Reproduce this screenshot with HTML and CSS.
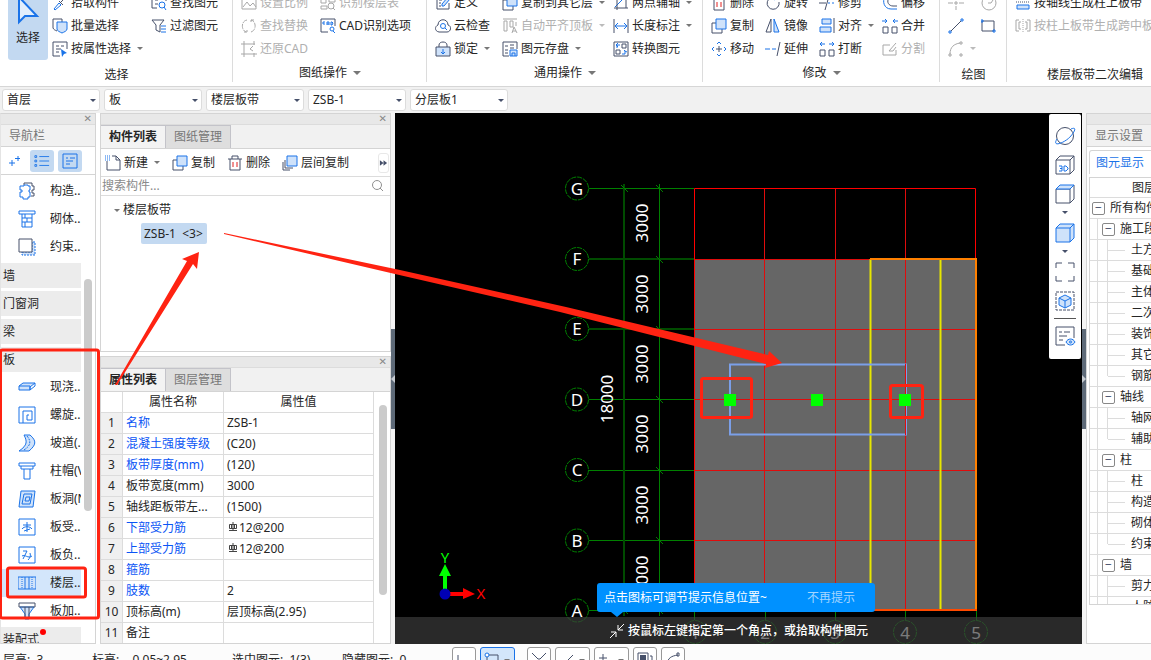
FILE: index.html
```html
<!DOCTYPE html>
<html lang="zh-CN">
<head>
<meta charset="utf-8">
<title>楼层板带</title>
<link rel="stylesheet" href="styles.css">
</head>
<body>
<svg class="defs" aria-hidden="true">
  <symbol id="i-pick" viewBox="0 0 16 16"><path class="b" d="M2 14l5-6 2 2-6 5z"/><path class="d" d="M7 6l4 4M9 7l4-4"/></symbol>
  <symbol id="i-batch" viewBox="0 0 16 16"><path class="d" d="M10 4V1H1v9c1 2 2 2 4 3"/><path class="b f" d="M5 4h10v7c0 2-3 3-5 4-2-1-5-2-5-4z"/></symbol>
  <symbol id="i-attr" viewBox="0 0 16 16"><path class="d" d="M8 15H1V1h14v7M4 5h3M9 5h3M4 8h5M4 11h3"/><path class="bf" d="M9 8l6 4-3 1-2 3z"/></symbol>
  <symbol id="i-find" viewBox="0 0 16 16"><path class="d" d="M6 13H1V1h14v5M4 9h3M4 5h3"/><circle class="b" cx="11" cy="10" r="3"/><path class="b" d="M13 12l2 3"/></symbol>
  <symbol id="i-filter" viewBox="0 0 16 16"><path class="d" d="M1 2h12L9 7v7l-4-2V7z"/><path class="b" d="M10 8h5M10 11h5M10 14h5"/></symbol>
  <symbol id="i-scale" viewBox="0 0 16 16"><path class="d" d="M1 2h14v12H1zM2 12l4-5 3 4 3-3 3 4"/></symbol>
  <symbol id="i-swap" viewBox="0 0 16 16"><path class="d" d="M6 2C0 3 0 12 5 14M3 14h3v-3M10 14c6-2 5-11 0-12M13 2h-3v3" stroke-dasharray="5 1"/></symbol>
  <symbol id="i-crop" viewBox="0 0 16 16"><path class="d" d="M3 0v13h13M0 3h14M3 13H0M3 13v3M13 0v4M13 12v4M12 5L9 8l3 2"/></symbol>
  <symbol id="i-ident" viewBox="0 0 16 16"><path class="d" d="M1 3h5v5H1zM9 1v6h6V3H9M1 11h6v3H1z"/><circle class="d" cx="11" cy="11" r="3"/><path class="d" d="M13 13l2 2"/></symbol>
  <symbol id="i-cad" viewBox="0 0 16 16"><path class="d" d="M8 14H1V1h14v7"/><path class="b" d="M5 4H3v2h2M7 7V4h2v3M7 6h2M11 4h1l1 1-1 2h-1z"/><circle class="b" cx="12" cy="11" r="2"/><path class="b" d="M13 13l2 2"/></symbol>
  <symbol id="i-def" viewBox="0 0 16 16"><path class="d" d="M9 1H2v13h12V8M4 5h3M4 8h2M4 11h2"/><path class="b f" d="M7 9l6-7 2 2-6 7H7z"/></symbol>
  <symbol id="i-cloud" viewBox="0 0 16 16"><path class="d" d="M4 14C-1 13 0 8 3 7c0-7 10-7 10 0 4 1 3 7-1 7z"/><circle class="b" cx="8" cy="8" r="2.5"/><path class="b" d="M10 10l2 2"/></symbol>
  <symbol id="i-lock" viewBox="0 0 16 16"><path class="d" d="M4 6V4c0-4 8-4 8 0v2"/><path class="d f" d="M1 6h14v9H1z"/><path class="b" d="M8 8v5M6 11l2 2 2-2"/></symbol>
  <symbol id="i-copy" viewBox="0 0 16 16"><path class="d" d="M5 5H1v10h10v-4"/><path class="b f" d="M5 1h10v10H5z"/></symbol>
  <symbol id="i-flat" viewBox="0 0 16 16"><path class="d" d="M1 1h14M2 3h3v10H2zM8 3h3v6H8zM10 15l2-6 3 6M11 13h3M14 4v4"/></symbol>
  <symbol id="i-save" viewBox="0 0 16 16"><path class="d" d="M7 15H1V1h14v7M3 5h3M8 4h4M3 9h3M8 7h4M3 12h3"/><path class="b f" d="M8 9h7v6H8zM10 15v-3h3v3"/></symbol>
  <symbol id="i-axis" viewBox="0 0 16 16"><path class="b" d="M2 12L14 0"/><path class="d" d="M1 13h14M4 0v15M13 4v9"/></symbol>
  <symbol id="i-dim" viewBox="0 0 16 16"><path class="d" d="M1 1v14M15 1v14"/><path class="b" d="M2 8h12M5 5L2 8l3 3M11 5l3 3-3 3"/></symbol>
  <symbol id="i-conv" viewBox="0 0 16 16"><path class="d" d="M1 1h14v14H1zM3 9h4v4H3zM9 3h4v4H9z"/><path class="b" d="M4 7V4h3M5 2L3 4l2 2M9 13h3v-3M11 9l1 1 2 1"/></symbol>
  <symbol id="i-del" viewBox="0 0 16 16"><path class="d" d="M1 4h14M5 4V1h6v3M3 4v11h10V4"/><path class="r" d="M6 7v5M10 7v5"/></symbol>
  <symbol id="i-move" viewBox="0 0 16 16"><path class="d" d="M8 5v6M5 8h6"/><path class="b" d="M6 3l2-2 2 2M6 13l2 2 2-2M3 6L1 8l2 2M13 6l2 2-2 2"/></symbol>
  <symbol id="i-rot" viewBox="0 0 16 16"><path class="d" d="M11 3a6 6 0 1 0 3 4"/><path class="b" d="M10 0l2 3-3 2"/></symbol>
  <symbol id="i-mirror" viewBox="0 0 16 16"><path class="d" d="M6 1v13H1z"/><path class="b f" d="M9 1v13h5z"/></symbol>
  <symbol id="i-ext" viewBox="0 0 16 16"><path class="b" d="M0 8h5M7 8h4"/><path class="d" d="M15 1l-3 14"/></symbol>
  <symbol id="i-trim" viewBox="0 0 16 16"><path class="d" d="M0 8h7M10 1L6 15"/><path class="b" d="M9 8h2M13 8h2"/></symbol>
  <symbol id="i-align" viewBox="0 0 16 16"><path class="b f" d="M3 1h9v5H3zM1 9h11v5H1z"/><path class="d" d="M15 0v15"/></symbol>
  <symbol id="i-break" viewBox="0 0 16 16"><path class="d" d="M1 9h5v6H1zM10 9h5v6h-5z"/><path class="b" d="M6 3H1M3 1L1 3l2 2M10 3h5M13 1l2 2-2 2"/></symbol>
  <symbol id="i-merge" viewBox="0 0 16 16"><path class="d" d="M1 9h5v6H1zM10 9h5v6h-5z"/><path class="b" d="M0 3h5M3 1l2 2-2 2M16 3h-5M13 1l-2 2 2 2"/></symbol>
  <symbol id="i-offset" viewBox="0 0 16 16"><path class="d" d="M15 11h-4c-4 0-7-4-4-8"/><path class="b" d="M15 14h-6C2 14 0 6 3 2"/></symbol>
  <symbol id="i-split" viewBox="0 0 16 16"><path class="d" d="M8 4H1v10h13V9M7 10l7-8M7 10l4 0 3-4"/></symbol>
  <symbol id="i-point" viewBox="0 0 16 16"><path class="d" d="M0 8h5M11 8h5M8 0v4M8 11v4M7 7h2v2H7z"/></symbol>
  <symbol id="i-circle" viewBox="0 0 16 16"><circle class="d" cx="8" cy="8" r="7"/><path class="d" d="M7 8h3l2-3"/></symbol>
  <symbol id="i-line" viewBox="0 0 16 16"><path class="d" d="M3 13L13 3"/><path class="b" d="M1 13h2v2H1zM13 1h2v2h-2z"/></symbol>
  <symbol id="i-rect" viewBox="0 0 16 16"><path class="d" d="M1 3h12v10H1z"/><path class="b" d="M0 2h2v2H0zM12 12h2v2h-2z"/></symbol>
  <symbol id="i-arc" viewBox="0 0 16 16"><path class="d" d="M2 13C2 6 6 3 12 2M1 13h2v2H1zM12 1h2v2h-2zM12 13h2v2h-2z"/></symbol>
  <symbol id="i-strip" viewBox="0 0 16 16"><path class="d" d="M1 7h14" stroke-dasharray="1 1"/><path class="b f" d="M2 10h12v4H2z"/></symbol>
  <symbol id="i-mid" viewBox="0 0 16 16"><path class="d" d="M4 2H1v11h3M12 2h3v11h-3M6 4H4v7h2M10 4h2v7h-2"/><path class="d" d="M8 1v14" stroke-dasharray="1 1"/></symbol>
  <symbol id="i-new" viewBox="0 0 16 16"><path class="d" d="M2 6v9h13V5l-4-4H7M11 1v4h4"/><path class="b" d="M0 1h5M0 3h5M0 5h5" stroke-dasharray="1 1"/></symbol>
  <symbol id="i-layers" viewBox="0 0 16 16"><path class="d" d="M3 5v8h8M1 7v8h7"/><path class="b f" d="M5 1h10v10H5z"/></symbol>
  <symbol id="i-mag" viewBox="0 0 16 16"><circle class="g" cx="8" cy="7" r="4.5"/><path class="g" d="M11 10l3 3"/></symbol>
  <symbol id="n-col" viewBox="0 0 18 18"><path class="d" d="M6 3V1h8v3h2v4h-2v3h2v3h-3"/><path class="b w" d="M4 4h2V3h4v1h2v4h-1v2h1v5h-2v2H5v-2H2v-5h2V8H2V4z"/></symbol>
  <symbol id="n-wall" viewBox="0 0 18 18"><path class="b" d="M1 1h16v3H1zM4 4v13h10V4M4 8h10M4 12h10M9 8v4M7 4v4M7 12v5"/></symbol>
  <symbol id="n-con" viewBox="0 0 18 18"><path class="b f" d="M4 14h10V4h3v13H4z" stroke-dasharray="2 1"/><path class="d w" d="M1 1h13v13H1z"/></symbol>
  <symbol id="n-slab" viewBox="0 0 18 18"><path class="b f" d="M1 8l4-3h12l-5 4v3H1z"/><path class="b" d="M1 8h11v4M12 12l5-4V5"/></symbol>
  <symbol id="n-spiral" viewBox="0 0 18 18"><path class="b" d="M5 17V5h9v9H9V9h2M1 17V1h16v16H1"/></symbol>
  <symbol id="n-ramp" viewBox="0 0 18 18"><path class="b f" d="M6 1h6c7 6 6 10-1 16H1C10 11 9 7 6 1z"/><path class="b" d="M9 2c5 6 3 10-3 14" stroke-dasharray="2 1"/></symbol>
  <symbol id="n-cap" viewBox="0 0 18 18"><path class="b" d="M1 1h16v3H1zM3 4v3h12V4M6 7v10h6V7"/></symbol>
  <symbol id="n-hole" viewBox="0 0 18 18"><path class="b f" d="M3 1h14l-2 16H1zM6 4h8l-2 10H4zM8 7h4l-1 4H7z"/></symbol>
  <symbol id="n-bar" viewBox="0 0 18 18"><path class="b" d="M1 1h16v16H1zM9 4v10M5 7h8M4 11c2-3 8-3 10 0M6 13l6-2"/></symbol>
  <symbol id="n-neg" viewBox="0 0 18 18"><path class="b" d="M1 1h16v16H1zM5 5h4L5 13M4 10c3-2 6 3 10 0M12 7c1 3 0 5-2 7"/></symbol>
  <symbol id="n-strip" viewBox="0 0 18 18"><path class="b f" d="M0 3h18v12H0z"/><path class="b" d="M4 3v12M14 3v12" stroke-dasharray="1 1"/><path class="b" d="M7 3v12M11 3v12"/></symbol>
  <symbol id="n-haunch" viewBox="0 0 18 18"><path class="b f" d="M2 5l5 7v5h4v-5l5-7z"/><path class="d" d="M1 1h16v4H1zM7 5v12M11 5v12"/></symbol>
</svg>

<div class="app">
  <header class="ribbon">
    <section class="group g-select">
      <div class="tools">
        <button class="big"><svg viewBox="0 0 24 32"><path d="M3 4v25l6-6h12z" fill="#e3effc" stroke="#1a73e8" stroke-width="2"/></svg>选择</button>
        <div class="col">
          <button><svg><use href="#i-pick"/></svg>拾取构件</button>
          <button><svg><use href="#i-batch"/></svg>批量选择</button>
          <button><svg><use href="#i-attr"/></svg>按属性选择<i class="caret"></i></button>
        </div>
        <div class="col">
          <button><svg><use href="#i-find"/></svg>查找图元</button>
          <button><svg><use href="#i-filter"/></svg>过滤图元</button>
        </div>
      </div>
      <div class="name plain">选择</div>
    </section>
    <section class="group g-draw">
      <div class="tools">
        <div class="col">
          <button disabled><svg><use href="#i-scale"/></svg>设置比例</button>
          <button disabled><svg><use href="#i-swap"/></svg>查找替换</button>
          <button disabled><svg><use href="#i-crop"/></svg>还原CAD</button>
        </div>
        <div class="col">
          <button disabled><svg><use href="#i-ident"/></svg>识别楼层表</button>
          <button><svg><use href="#i-cad"/></svg>CAD识别选项</button>
        </div>
      </div>
      <div class="name">图纸操作<i class="caret"></i></div>
    </section>
    <section class="group g-common">
      <div class="tools">
        <div class="col">
          <button><svg><use href="#i-def"/></svg>定义</button>
          <button><svg><use href="#i-cloud"/></svg>云检查</button>
          <button><svg><use href="#i-lock"/></svg>锁定<i class="caret"></i></button>
        </div>
        <div class="col">
          <button><svg><use href="#i-copy"/></svg>复制到其它层<i class="caret"></i></button>
          <button disabled><svg><use href="#i-flat"/></svg>自动平齐顶板<i class="caret"></i></button>
          <button><svg><use href="#i-save"/></svg>图元存盘<i class="caret"></i></button>
        </div>
        <div class="col">
          <button><svg><use href="#i-axis"/></svg>两点辅轴<i class="caret"></i></button>
          <button><svg><use href="#i-dim"/></svg>长度标注<i class="caret"></i></button>
          <button><svg><use href="#i-conv"/></svg>转换图元</button>
        </div>
      </div>
      <div class="name">通用操作<i class="caret"></i></div>
    </section>
    <section class="group g-modify">
      <div class="tools">
        <div class="col">
          <button><svg><use href="#i-del"/></svg>删除</button>
          <button><svg><use href="#i-copy"/></svg>复制</button>
          <button><svg><use href="#i-move"/></svg>移动</button>
        </div>
        <div class="col">
          <button><svg><use href="#i-rot"/></svg>旋转</button>
          <button><svg><use href="#i-mirror"/></svg>镜像</button>
          <button><svg><use href="#i-ext"/></svg>延伸</button>
        </div>
        <div class="col">
          <button><svg><use href="#i-trim"/></svg>修剪</button>
          <button><svg><use href="#i-align"/></svg>对齐<i class="caret"></i></button>
          <button><svg><use href="#i-break"/></svg>打断</button>
        </div>
        <div class="col">
          <button><svg><use href="#i-offset"/></svg>偏移</button>
          <button><svg><use href="#i-merge"/></svg>合并</button>
          <button disabled><svg><use href="#i-split"/></svg>分割</button>
        </div>
      </div>
      <div class="name">修改<i class="caret"></i></div>
    </section>
    <section class="group g-paint">
      <div class="tools">
        <div class="col">
          <button disabled aria-label="点"><svg><use href="#i-point"/></svg></button>
          <button aria-label="直线"><svg><use href="#i-line"/></svg></button>
          <button disabled aria-label="弧线"><svg><use href="#i-arc"/></svg><i class="caret"></i></button>
        </div>
        <div class="col">
          <button disabled aria-label="圆"><svg><use href="#i-circle"/></svg></button>
          <button aria-label="矩形"><svg><use href="#i-rect"/></svg></button>
        </div>
      </div>
      <div class="name plain">绘图</div>
    </section>
    <section class="group g-edit">
      <div class="tools">
        <div class="col">
          <button><svg><use href="#i-strip"/></svg>按轴线生成柱上板带</button>
          <button disabled><svg><use href="#i-mid"/></svg>按柱上板带生成跨中板带</button>
        </div>
      </div>
      <div class="name plain">楼层板带二次编辑</div>
    </section>
  </header>

  <div class="filters">
    <label class="pick"><select aria-label="楼层"><option>首层</option></select></label>
    <label class="pick"><select aria-label="构件大类"><option>板</option></select></label>
    <label class="pick"><select aria-label="构件类型"><option>楼层板带</option></select></label>
    <label class="pick"><select aria-label="构件"><option>ZSB-1</option></select></label>
    <label class="pick"><select aria-label="分层"><option>分层板1</option></select></label>
  </div>

  <main class="work">
    <nav class="panel nav">
      <div class="strip"><button class="close" aria-label="关闭">✕</button></div>
      <div class="title">导航栏</div>
      <div class="modes">
        <button aria-label="添加"><svg viewBox="0 0 16 16"><path class="b" d="M4 7v6M1 10h6M10 3v5M7 5.500h5"/></svg></button>
        <button class="on" aria-label="列表"><svg viewBox="0 0 18 16"><path class="b" d="M6 3h11M6 8h11M6 13h11M1 2h2v2H1zM1 7h2v2H1zM1 12h2v2H1z"/></svg></button>
        <button class="on" aria-label="详情"><svg viewBox="0 0 16 16"><path class="b" d="M1 1h14v14H1zM4 5h2M8 5h5M4 8h7M4 11h4"/></svg></button>
      </div>
      <div class="scroller">
        <div class="items">
          <button class="item"><svg><use href="#n-col"/></svg>构造..</button>
          <button class="item"><svg><use href="#n-wall"/></svg>砌体..</button>
          <button class="item"><svg><use href="#n-con"/></svg>约束..</button>
          <button class="cat">墙</button>
          <button class="cat">门窗洞</button>
          <button class="cat">梁</button>
          <button class="cat">板</button>
          <button class="item"><svg><use href="#n-slab"/></svg>现浇..</button>
          <button class="item"><svg><use href="#n-spiral"/></svg>螺旋..</button>
          <button class="item"><svg><use href="#n-ramp"/></svg>坡道(..</button>
          <button class="item"><svg><use href="#n-cap"/></svg>柱帽(V)</button>
          <button class="item"><svg><use href="#n-hole"/></svg>板洞(N)</button>
          <button class="item"><svg><use href="#n-bar"/></svg>板受..</button>
          <button class="item"><svg><use href="#n-neg"/></svg>板负..</button>
          <button class="item sel"><svg><use href="#n-strip"/></svg>楼层..</button>
          <button class="item"><svg><use href="#n-haunch"/></svg>板加..</button>
          <button class="cat">装配式<span class="dot"></span></button>
        </div>
        <div class="track"><div class="thumb nav-thumb"></div></div>
      </div>
    </nav>

    <div class="middle">
      <section class="panel list">
        <div class="strip"><button class="close" aria-label="关闭">✕</button></div>
        <div class="tabs"><button class="tab on">构件列表</button><button class="tab">图纸管理</button></div>
        <div class="bar">
          <button><svg><use href="#i-new"/></svg>新建<i class="caret"></i></button>
          <button><svg><use href="#i-copy"/></svg>复制</button>
          <button><svg><use href="#i-del"/></svg>删除</button>
          <button><svg><use href="#i-layers"/></svg>层间复制</button>
          <button class="more" aria-label="更多"><svg viewBox="0 0 10 8"><path d="M1 1l4 3-4 3zM5 1l4 3-4 3z" fill="#46506a"/></svg></button>
        </div>
        <div class="search"><input type="text" aria-label="搜索构件" placeholder="搜索构件..."><svg><use href="#i-mag"/></svg></div>
        <div class="tree">
          <div class="parent"><i class="caret"></i>楼层板带</div>
          <button class="leaf">ZSB-1&nbsp; &lt;3&gt;</button>
        </div>
      </section>
      <section class="panel props">
        <div class="strip"><button class="close" aria-label="关闭">✕</button></div>
        <div class="tabs"><button class="tab on">属性列表</button><button class="tab">图层管理</button></div>
        <div class="grid">
          <table>
            <thead><tr><th class="no"></th><th class="key">属性名称</th><th>属性值</th></tr></thead>
            <tbody>
              <tr><td>1</td><td class="link">名称</td><td>ZSB-1</td></tr>
              <tr><td>2</td><td class="link">混凝土强度等级</td><td>(C20)</td></tr>
              <tr><td>3</td><td class="link">板带厚度(mm)</td><td>(120)</td></tr>
              <tr><td>4</td><td>板带宽度(mm)</td><td>3000</td></tr>
              <tr><td>5</td><td>轴线距板带左...</td><td>(1500)</td></tr>
              <tr><td>6</td><td class="link">下部受力筋</td><td><svg class="rebar" viewBox="0 0 10 10"><path d="M1.500 2.500h7v4h-7zM5 0v9M1 8.500h8M3.500 2v4M6.500 2v4"/></svg>12@200</td></tr>
              <tr><td>7</td><td class="link">上部受力筋</td><td><svg class="rebar" viewBox="0 0 10 10"><path d="M1.500 2.500h7v4h-7zM5 0v9M1 8.500h8M3.500 2v4M6.500 2v4"/></svg>12@200</td></tr>
              <tr><td>8</td><td class="link">箍筋</td><td></td></tr>
              <tr><td>9</td><td class="link">肢数</td><td>2</td></tr>
              <tr><td>10</td><td>顶标高(m)</td><td>层顶标高(2.95)</td></tr>
              <tr><td>11</td><td>备注</td><td></td></tr>
            </tbody>
          </table>
          <div class="track"><div class="thumb prop-thumb"></div></div>
        </div>
      </section>
    </div>

    <div class="split"><button aria-label="收起左侧"><svg viewBox="0 0 4 8"><path d="M4 0v8L0 4z" fill="#c5cad0"/></svg></button></div>

    <section class="canvas">
      <svg class="plan" width="700" height="531" viewBox="395 113 700 531">
        <path d="M695 259h281v352H695z" fill="#666"/>
        <g stroke="#008000" fill="none">
          <path d="M589 188.500h105M589 399.500h105M589 470.500h105M589 540.500h105M589 610.500h105M659.500 184v432"/>
          <path stroke="#004b00" stroke-width="2" d="M589 259h105M589 329h105M624 184v432"/>
          <path d="M694.500 611v9M765.500 611v9M835.500 611v9M905.500 611v9M976.500 611v9"/>
          <path d="M621 185l7 7M656 185l7 7M656 256l7 7M656 326l7 7M656 396l7 7M656 467l7 7M656 537l7 7M656 607l7 7M621 607l7 7"/>
          <g stroke-dasharray="5 1">
            <circle cx="577" cy="188.500" r="11.500"/><circle cx="577" cy="259" r="11.500"/><circle cx="577" cy="329" r="11.500"/><circle cx="577" cy="399.500" r="11.500"/><circle cx="577" cy="470" r="11.500"/><circle cx="577" cy="540.500" r="11.500"/><circle cx="577" cy="610.500" r="11.500"/>
            <circle cx="695" cy="632" r="11.500"/><circle cx="765" cy="632" r="11.500"/><circle cx="835" cy="632" r="11.500"/><circle cx="905" cy="632" r="11.500"/><circle cx="976" cy="632" r="11.500"/>
          </g>
        </g>
        <g stroke="#e00c0c" fill="none">
          <path d="M764.500 188v423M835.500 188v423M905.500 188v423M695 259.500h281M695 329.500h281M695 399.500h281M695 470.500h281M695 540.500h281"/>
          <path stroke="#f00" d="M694.500 611V188.500h281V259M695 610.500h175"/>
        </g>
        <path d="M870.500 259v352M940.500 259v352" stroke="#e6e600" stroke-width="2"/>
        <path d="M870 259h106v351" stroke="#ff8000" stroke-width="2" fill="none"/>
        <path d="M870 610h107" stroke="#ff4a00" stroke-width="2"/>
        <path d="M730 364.500h176v70H730z" fill="none" stroke="#7b9fe8" stroke-width="2"/>
        <path d="M905.500 364v71" stroke="#e00c0c"/>
        <g fill="#0f0"><path d="M724 394h12v12h-12zM811 394h12v12h-12zM899 394h12v12h-12z"/></g>
        <g class="axis">
          <text x="577" y="195">G</text><text x="577" y="265">F</text><text x="577" y="335">E</text><text x="577" y="406">D</text><text x="577" y="476">C</text><text x="577" y="547">B</text><text x="577" y="617">A</text>
          <text x="695" y="639">1</text><text x="765" y="639">2</text><text x="835" y="639">3</text><text x="905" y="639">4</text><text x="976" y="639">5</text>
          <text transform="translate(648 223) rotate(-90)">3000</text><text transform="translate(648 294) rotate(-90)">3000</text><text transform="translate(648 364) rotate(-90)">3000</text><text transform="translate(648 434) rotate(-90)">3000</text><text transform="translate(648 505) rotate(-90)">3000</text><text transform="translate(648 575) rotate(-90)">3000</text>
          <text transform="translate(613 399) rotate(-90)">18000</text>
        </g>
        <path d="M443 594v-18h-4l6-12 6 12h-4v18z" fill="#0f0"/>
        <path d="M445 592h18v-4l12 6-12 5v-3h-18z" fill="#f00"/>
        <circle cx="445" cy="594" r="5.500" fill="#0000b4"/>
        <text class="ucs" x="445" y="563" fill="#0f0">Y</text><text class="ucs" x="481" y="599" fill="#f00">X</text>
      </svg>
      <div class="views">
        <button aria-label="动态观察"><svg viewBox="0 0 22 22"><circle class="d" cx="11" cy="11" r="8.500"/><path class="b" d="M3 14c-5 8 5 5 12-1 5-5 9-12 2-9"/></svg></button>
        <button aria-label="三维"><svg viewBox="0 0 22 22"><path class="d" d="M2 6h14v14H2zM2 6l4-4h14v14l-4 4M16 6l4-4"/><path class="b" d="M5 12h3v5H5M6 14.500h2M10 12h2l2 2v1l-2 2h-2z"/></svg></button>
        <button aria-label="俯视"><svg viewBox="0 0 22 22"><path class="d" d="M2 6h14v14H2zM20 2v14l-4 4"/><path class="b f" d="M2 6l4-4h14l-4 4z"/></svg></button>
        <i class="caret"></i>
        <button aria-label="着色"><svg viewBox="0 0 22 22"><path class="b f" d="M2 6l4-4h14v14l-4 4H2z"/><path class="b" d="M2 6h14v14M16 6l4-4"/></svg></button>
        <i class="caret"></i>
        <button aria-label="全屏"><svg viewBox="0 0 22 22"><path class="d" d="M2 7V2h6M14 2h6v5M20 15v5h-6M8 20H2v-5"/></svg></button>
        <button aria-label="局部三维"><svg viewBox="0 0 22 22"><path class="d" d="M2 2h18v18H2z" stroke-dasharray="3 1"/><path class="b f" d="M11 5l6 3v7l-6 3-6-3V8z"/><path class="b" d="M5 8l6 3 6-3M11 11v7"/></svg></button>
        <hr>
        <button aria-label="显示设置"><svg viewBox="0 0 22 22"><path class="d" d="M11 20H2V2h18v11M5 7h3M10 7h6M5 11h8M5 15h4"/><path class="b f" d="M12 17c2-4 7-4 9 0-2 4-7 4-9 0z"/><circle class="b" cx="16.500" cy="17" r="1"/></svg></button>
      </div>
      <div class="prompt">
        <div class="tip"><span>点击图标可调节提示信息位置~</span><button>不再提示</button></div>
        <svg viewBox="0 0 16 16"><path d="M15 1L9 7M9 2v5h5M1 15l6-6M2 9h5v5" fill="none" stroke="#fff"/></svg>按鼠标左键指定第一个角点，或拾取构件图元
      </div>
    </section>

    <div class="split"><button aria-label="收起右侧"><svg viewBox="0 0 4 8"><path d="M0 0v8l4-4z" fill="#c5cad0"/></svg></button></div>

    <aside class="panel display">
      <div class="strip"></div>
      <div class="title">显示设置</div>
      <div class="subtabs"><button>图元显示</button></div>
      <div class="layers">
        <div class="head">图层名称</div>
        <div class="row"><button class="tog">−</button>所有构件</div>
        <div class="row"><i class="guide"></i><button class="tog">−</button>施工段</div>
        <div class="row"><i class="guide"></i><i class="guide"></i><i class="dash"></i>土方工程</div>
        <div class="row"><i class="guide"></i><i class="guide"></i><i class="dash"></i>基础工程</div>
        <div class="row"><i class="guide"></i><i class="guide"></i><i class="dash"></i>主体结构</div>
        <div class="row"><i class="guide"></i><i class="guide"></i><i class="dash"></i>二次结构</div>
        <div class="row"><i class="guide"></i><i class="guide"></i><i class="dash"></i>装饰装修</div>
        <div class="row"><i class="guide"></i><i class="guide"></i><i class="dash"></i>其它土建</div>
        <div class="row"><i class="guide"></i><i class="guide end"></i><i class="dash"></i>钢筋</div>
        <div class="row"><i class="guide"></i><button class="tog">−</button>轴线</div>
        <div class="row"><i class="guide"></i><i class="guide"></i><i class="dash"></i>轴网</div>
        <div class="row"><i class="guide"></i><i class="guide end"></i><i class="dash"></i>辅助轴线</div>
        <div class="row"><i class="guide"></i><button class="tog">−</button>柱</div>
        <div class="row"><i class="guide"></i><i class="guide"></i><i class="dash"></i>柱</div>
        <div class="row"><i class="guide"></i><i class="guide"></i><i class="dash"></i>构造柱</div>
        <div class="row"><i class="guide"></i><i class="guide"></i><i class="dash"></i>砌体柱</div>
        <div class="row"><i class="guide"></i><i class="guide end"></i><i class="dash"></i>约束边缘</div>
        <div class="row"><i class="guide"></i><button class="tog">−</button>墙</div>
        <div class="row"><i class="guide"></i><i class="guide"></i><i class="dash"></i>剪力墙</div>
        <div class="row"><i class="guide"></i><i class="guide"></i><i class="dash"></i>人防墙</div>
      </div>
    </aside>
  </main>

  <footer class="status">
    <div class="line">
      <span class="s1">层高:&nbsp; 3</span><span class="s2">标高:&nbsp;&nbsp; -0.05~2.95</span><span class="s3">选中图元:&nbsp; 1(3)</span><span class="s4">隐藏图元:&nbsp; 0</span>
      <div class="snaps">
        <button aria-label="正交"><svg viewBox="0 0 16 16"><path class="d" d="M2 3v11h12"/></svg></button>
        <button class="wide on" aria-label="框选"><svg viewBox="0 0 16 16"><path class="d" d="M3 3h11v11H3z"/><circle class="b w" cx="3" cy="3" r="2"/></svg><i class="caret"></i></button>
        <button class="lead" aria-label="交点"><svg viewBox="0 0 16 16"><path class="d" d="M1 1l6 6h2l6-6M1 15l6-6h2l6 6"/></svg></button>
        <button class="wide" aria-label="垂点"><svg viewBox="0 0 16 16"><path class="d" d="M14 3L4 13M3 9l4 4"/></svg><i class="caret"></i></button>
        <button class="wide" aria-label="偏移"><svg viewBox="0 0 16 16"><path class="d" d="M5 2v8M1 6h8"/></svg><i class="caret"></i></button>
        <button aria-label="图层"><svg viewBox="0 0 16 16"><path class="d" d="M1 1h10v13H1zM13 4h2v12H5"/><path d="M3 3h6v9H3z" fill="#46506a"/></svg></button>
        <button aria-label="弧"><svg viewBox="0 0 16 16"><path class="d" d="M2 12C3 6 6 4 13 3M1 12h2v2H1zM12 1h2v3h-2z"/></svg></button>
      </div>
    </div>
  </footer>

  <svg class="marks" width="1151" height="660" aria-hidden="true">
    <g fill="none" stroke="#ff2312" stroke-width="3">
      <rect x="0.500" y="350" width="98" height="268" rx="2"/>
      <rect x="7.500" y="568" width="78" height="29" rx="2"/>
      <rect x="701.500" y="378.500" width="50" height="39" rx="2"/>
      <rect x="890.500" y="385.500" width="32" height="32" rx="2"/>
    </g>
    <path d="M115 385l72-124-5-2 17-7-2 17-4-5-76 121z" fill="#ff2312"/>
    <path d="M224 233l176 37 166 37 202 48 1-4 13 12-17 5 1-4-206-52-165-38-171-40z" fill="#ff2312"/>
  </svg>
</div>
</body>
</html>
```

FILE: styles.css
```css
* { box-sizing: border-box; }

body {
  margin: 0;
  overflow: hidden;
  background: #fff;
  color: #262626;
  font: 12px/20px "Noto Sans", "Noto Sans CJK SC", sans-serif;
}

button, select, input { font: inherit; color: inherit; margin: 0; }
button { border: 0; padding: 0; background: none; white-space: nowrap; text-align: left; }
svg { display: block; flex: none; }
.defs { position: absolute; width: 0; height: 0; }

.d, .b, .r, .g { fill: none; stroke-width: 1; }
.d { stroke: #46506a; }
.b { stroke: #1a73e8; }
.r { stroke: #e02020; }
.g { stroke: #909090; }
.f { fill: #cfe2fa; }
.w { fill: #fff; }
.bf { fill: #1a73e8; }

.caret {
  flex: none;
  width: 6px;
  height: 3px;
  border: 3px solid transparent;
  border-top-color: #777;
  border-bottom: 0;
}

.app { position: relative; display: flex; flex-direction: column; height: 100vh; }

/* ribbon */
.ribbon { display: flex; align-items: flex-end; flex: none; height: 86px; overflow: hidden; }
.group { flex: none; position: relative; }
.group::after { content: ""; position: absolute; right: 0; top: 0; bottom: 4px; width: 1px; background: #dcdcdc; }
.tools { display: grid; height: 69px; padding-left: 8px; }
.g-select { width: 233px; }
.g-select .tools { grid-template-columns: 44px 99px 1fr; }
.g-draw { width: 194px; }
.g-draw .tools { grid-template-columns: 79px 1fr; }
.g-common { width: 276px; }
.g-common .tools { grid-template-columns: 67px 111px 1fr; }
.g-modify { width: 237px; }
.g-modify .tools { grid-template-columns: 54px 54px 63px 1fr; }
.g-paint { width: 67px; }
.g-paint .tools { grid-template-columns: 33px 1fr; }
.g-edit { width: 176px; }
.col { display: flex; flex-direction: column; }
.col button { display: flex; align-items: center; gap: 3px; height: 23px; }
.col svg, .bar svg { width: 16px; height: 16px; }
.col .caret { margin-left: 3px; }
.col button:disabled { color: #b0b0b0; }
.col button:disabled svg { filter: grayscale(1) opacity(0.5); }
.col button:disabled .caret { border-top-color: #bbb; }
.big {
  display: flex;
  flex-direction: column;
  align-items: center;
  justify-content: flex-end;
  gap: 0;
  width: 40px;
  padding-bottom: 12px;
  border-radius: 3px;
  background: #c3d9f1;
}
.big svg { width: 24px; height: 32px; margin-bottom: 3px; }
.name { display: flex; align-items: center; justify-content: center; gap: 6px; height: 26px; }
.name.plain { padding-top: 3px; }
.name .caret { border-width: 4px 4px 0; width: 8px; height: 4px; }

/* filter row */
.filters {
  display: flex;
  align-items: center;
  gap: 4px;
  flex: none;
  height: 27px;
  padding-left: 2px;
  border-top: 1px solid #d6d6d6;
  background: #f1f1f1;
}
.pick { position: relative; width: 98px; }
.pick select {
  display: block;
  appearance: none;
  width: 100%;
  height: 22px;
  padding: 0 4px;
  border: 1px solid #dcdcdc;
  border-radius: 3px;
  background: #fff;
}
.pick::after {
  content: "";
  position: absolute;
  right: 4px;
  top: 10px;
  border: 3px solid transparent;
  border-top-color: #46506a;
  border-bottom: 0;
}

/* panels */
.work { display: flex; flex: 1; min-height: 0; }
.panel { display: flex; flex-direction: column; min-height: 0; border: 1px solid #d4d4d4; background: #fff; overflow: hidden; }
.strip { display: flex; justify-content: flex-end; align-items: center; flex: none; height: 11px; padding-right: 3px; background: #e8e8e8; border-bottom: 1px solid #dcdcdc; }
.close { font: 10px/10px "DejaVu Sans", sans-serif; color: #888; }
.title { flex: none; height: 22px; padding-left: 8px; line-height: 21px; color: #777; background: #f1f1f1; border-bottom: 1px solid #d4d4d4; }
.thumb { width: 8px; border-radius: 4px; background: #cbcbcb; }

.nav { width: 96px; margin-right: 4px; flex: none; border-left-color: #e4e4e4; }
.modes { display: flex; align-items: center; gap: 4px; flex: none; height: 28px; padding-left: 5px; border-bottom: 1px solid #d4d4d4; }
.modes button { display: flex; align-items: center; justify-content: center; width: 24px; height: 22px; border-radius: 3px; }
.modes button:first-child { width: 20px; }
.modes .on { background: #c3d9f1; }
.modes svg { width: 16px; height: 16px; }
.scroller { display: flex; flex: 1; min-height: 0; padding-top: 2px; }
.items { display: flex; flex-direction: column; width: 80px; overflow: hidden; }
.item { display: flex; align-items: center; gap: 14px; flex: none; width: 80px; height: 28px; padding-left: 17px; overflow: hidden; }
.item svg { width: 18px; height: 18px; }
.item.sel { background: #d3e6fb; }
.cat { flex: none; position: relative; width: 80px; height: 25px; margin: 2px 0 1px; padding-left: 2px; line-height: 25px; background: #ececec; }
.dot { position: absolute; left: 39px; top: 2px; width: 6px; height: 6px; border-radius: 50%; background: #f00; }
.track { padding-left: 3px; }
.nav-thumb { height: 232px; margin-top: 102px; }

.middle { display: flex; flex-direction: column; gap: 4px; flex: none; width: 291px; }
.list { flex: 0 0 239px; }
.props { flex: 1; }
.tabs { display: flex; flex: none; height: 24px; background: #f1f1f1; border-bottom: 1px solid #d4d4d4; }
.tab { padding: 0 8px; border-right: 1px solid #c3c3c9; border-top: 1px solid #c3c3c9; background: #dedede; color: #777; }
.tab.on { background: #f3f3f3; color: #262626; font-weight: 700; }
.bar { display: flex; align-items: center; gap: 12px; flex: none; height: 28px; padding: 0 1px 0 4px; border-bottom: 1px solid #dcdcdc; }
.bar button { display: flex; align-items: center; gap: 3px; }
.bar .caret { margin-left: 3px; }
.bar .more { margin-left: auto; width: 11px; height: 20px; border: 1px solid #e8e8e8; border-radius: 3px; }
.bar .more svg { width: 9px; height: 8px; }
.search { display: flex; align-items: center; flex: none; height: 19px; padding-right: 5px; border-bottom: 1px solid #dcdcdc; }
.search input { flex: 1; min-width: 0; height: 18px; padding: 0 1px; border: 0; outline: 0; background: none; }
.search input::placeholder { color: #8a8a8a; opacity: 1; }
.search svg { width: 16px; height: 16px; }
.tree { padding: 4px 0 0 13px; }
.parent { display: flex; align-items: center; gap: 3px; height: 20px; }
.leaf { height: 21px; margin: 3px 0 0 27px; padding: 0 4px 0 3px; border-radius: 2px; background: #c3d9f1; }

.grid { display: flex; flex: 1; min-height: 0; overflow: hidden; align-items: flex-start; }
.grid .track { padding-left: 5px; }
.prop-thumb { height: 190px; margin-top: 13px; }
table { width: 273px; border-collapse: separate; border-spacing: 0; table-layout: fixed; }
th, td { height: 21px; padding: 0 3px; font-weight: 400; line-height: 20px; text-align: left; white-space: nowrap; border: solid #dcdcdc; border-width: 0 1px 1px 0; }
th { text-align: center; }
.no { width: 22px; }
.key { width: 101px; }
td:first-child { padding: 0; text-align: center; background: #f0f0f0; }
.link { color: #0a55f5; }
.rebar { display: inline-block; width: 10px; height: 10px; margin: 0 1px 4px 1px; vertical-align: middle; fill: none; stroke: #444; }

.split { display: flex; align-items: center; flex: none; width: 4px; background: #f4f4f4; }
.split button { display: flex; align-items: center; width: 4px; height: 100px; background: #5e6a78; }
.split svg { width: 4px; height: 8px; }

/* drawing area */
.canvas { position: relative; flex: 1; min-width: 0; overflow: hidden; background: #000; }
.plan { position: absolute; left: 0; top: 0; }
.axis { fill: #fff; font-size: 17px; text-anchor: middle; }
.ucs { font-size: 15px; text-anchor: middle; }
.views {
  position: absolute;
  right: 1px;
  top: 1px;
  display: flex;
  flex-direction: column;
  align-items: center;
  width: 32px;
  padding: 11px 0 12px;
  border-radius: 2px;
  background: #fff;
}
.views button { height: 22px; margin-bottom: 7px; }
.views svg { width: 22px; height: 22px; }
.views .caret { margin: -1px 0 8px; border-top-color: #46506a; }
.views hr { width: 22px; margin: -1px 0 6px; border: 0; border-top: 1px solid #555; }
.views button:last-child { margin-bottom: 0; }
.prompt {
  position: absolute;
  left: 0;
  right: 0;
  bottom: 0;
  display: flex;
  align-items: center;
  justify-content: center;
  gap: 3px;
  height: 27px;
  color: #fff;
  font-weight: 500;
  background: rgba(60, 60, 60, 0.68);
}
.prompt > svg { width: 16px; height: 16px; }
.tip {
  position: absolute;
  left: 202px;
  bottom: 32px;
  display: flex;
  align-items: center;
  justify-content: space-between;
  width: 278px;
  height: 29px;
  padding: 0 20px 0 7px;
  border-radius: 3px;
  font-weight: 400;
  background: #0091ff;
}
.tip button { color: #a5d6ff; }
.tip::after { content: ""; position: absolute; left: 14px; top: 29px; border: 6px solid transparent; border-top: 5px solid #0091ff; border-bottom: 0; }

/* display settings */
.display { flex: none; width: 65px; border-right: 0; }
.subtabs { flex: none; height: 30px; padding: 3px 0 0 2px; overflow: hidden; }
.subtabs button { width: 90px; height: 24px; padding-left: 6px; border: 1px solid #d4d4d4; border-bottom: 0; border-radius: 3px 3px 0 0; color: #1a73e8; }
.layers { height: 428px; margin-left: 2px; border: 1px solid #d4d4d4; border-right: 0; overflow: hidden; }
.head { height: 20px; padding-left: 42px; white-space: nowrap; border-bottom: 1px solid #dcdcdc; line-height: 19px; }
.row { display: flex; align-items: center; height: 21px; white-space: nowrap; border-bottom: 1px solid #dcdcdc; }
.guide { flex: none; width: 10px; height: 100%; background: linear-gradient(#dcdcdc, #dcdcdc) 7px 0 / 1px 100% no-repeat; }
.guide.end { background-size: 1px 50%; }
.dash { flex: none; width: 17px; height: 1px; margin: 0 6px 0 -2px; background: #dcdcdc; }
.tog { flex: none; width: 13px; height: 13px; margin: 0 5px 0 2px; border: 1px solid #888; border-radius: 2px; background: #fff; line-height: 10px; text-align: center; color: #46506a; }

/* status bar */
.status { flex: none; height: 16px; overflow: hidden; background: #fcfcfc; }
.line { display: flex; align-items: center; height: 32px; padding-left: 3px; white-space: nowrap; }
.s1 { width: 89px; }
.s2 { width: 140px; }
.s3 { width: 110px; }
.s4 { width: 110px; }
.snaps { display: flex; gap: 4px; }
.snaps button { display: flex; align-items: center; gap: 5px; width: 24px; height: 26px; padding-left: 3px; border: 1px solid #999; border-radius: 3px; background: #fff; }
.snaps svg { width: 16px; height: 16px; }
.snaps .wide { width: 35px; gap: 4px; }
.snaps .on { border-color: #1a73e8; background: #d3e6fb; }
.snaps .lead { margin-left: 8px; }

.marks { position: absolute; left: 0; top: 0; pointer-events: none; }
```
